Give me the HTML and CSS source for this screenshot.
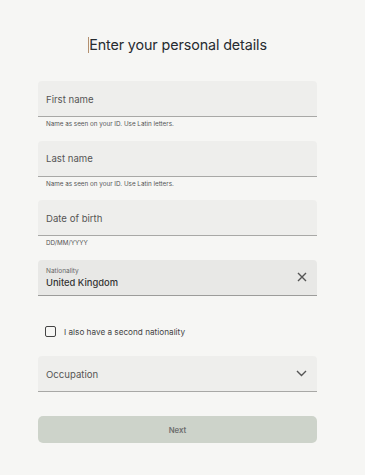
FILE: index.html
```html
<!DOCTYPE html>
<html lang="en">
<head>
<meta charset="utf-8">
<link rel="stylesheet" href="styles.css">
</head>
<body>
<main class="page">
  <h1 class="title"><span class="caret"></span>Enter your personal details</h1>
  <form class="form">
    <div class="group">
      <div class="field"><span class="placeholder">First name</span></div>
      <p class="hint">Name as seen on your ID. Use Latin letters.</p>
    </div>
    <div class="group">
      <div class="field"><span class="placeholder">Last name</span></div>
      <p class="hint">Name as seen on your ID. Use Latin letters.</p>
    </div>
    <div class="group">
      <div class="field"><span class="placeholder">Date of birth</span></div>
      <p class="hint">DD/MM/YYYY</p>
    </div>
    <div class="group">
      <div class="field field-filled">
        <div class="stack">
          <span class="small-label">Nationality</span>
          <span class="value">United Kingdom</span>
        </div>
        <svg class="icon" width="10" height="10" viewBox="0 0 10 10"><path d="M1 1L9 9M9 1L1 9" stroke="#555" stroke-width="1.4" fill="none"/></svg>
      </div>
    </div>
    <label class="check">
      <span class="box"></span>
      <span class="check-text">I also have a second nationality</span>
    </label>
    <div class="field">
      <span class="placeholder">Occupation</span>
      <svg class="icon" width="11" height="7" viewBox="0 0 11 7"><path d="M1 1L5.5 5.5L10 1" stroke="#555" stroke-width="1.4" fill="none"/></svg>
    </div>
    <button type="button" class="next">Next</button>
  </form>
</main>
</body>
</html>
```
FILE: styles.css
```css
html, body {
  margin: 0;
  padding: 0;
  background: #f6f6f4;
}
body {
  font-family: Inter, "Noto Sans", sans-serif;
  color: #333;
}
.page {
  width: 279px;
  margin-left: 38px;
  padding-top: 34px;
}
.title {
  margin: 0;
  text-align: center;
  font-size: 14.3px;
  font-weight: 400;
  color: #262b30;
  line-height: 22px;
  letter-spacing: -0.1px;
}
.caret {
  display: inline-block;
  width: 1px;
  height: 16px;
  background: #b39070;
  vertical-align: -3px;
}
.form {
  margin-top: 25px;
  display: flex;
  flex-direction: column;
}
.group {
  margin-bottom: 5.5px;
}
.field {
  height: 35px;
  background: #eeeeec;
  border-radius: 4px 4px 0 0;
  border-bottom: 1px solid #a8a8a6;
  display: flex;
  align-items: center;
  justify-content: space-between;
  padding: 0 10px 0 8px;
}
.field-filled {
  background: #e8e8e6;
  border-bottom-color: #9c9c9a;
}
.placeholder {
  font-size: 9.6px;
  color: #555;
  padding-top: 1px;
}
.hint {
  margin: 3px 0 0 8px;
  font-size: 6.3px;
  line-height: 9px;
  color: #555;
  height: 15px;
}
.stack {
  display: flex;
  flex-direction: column;
  padding-top: 2px;
}
.small-label {
  font-size: 6.5px;
  color: #666;
  line-height: 9px;
}
.value {
  font-size: 9.4px;
  font-weight: 500;
  color: #333;
  line-height: 13px;
}
.icon {
  display: block;
}
.check {
  display: flex;
  align-items: center;
  gap: 8px;
  margin: 25px 0 19px 7px;
}
.box {
  width: 9px;
  height: 9px;
  border: 1.5px solid #444;
  border-radius: 2px;
}
.check-text {
  font-size: 8.2px;
  color: #444;
}
.next {
  margin-top: 24px;
  height: 27px;
  border: 0;
  border-radius: 5px;
  background: #cdd3ca;
  color: #6f6f6f;
  font-family: Inter, "Noto Sans", sans-serif;
  font-size: 7.8px;
  font-weight: 600;
}
```
